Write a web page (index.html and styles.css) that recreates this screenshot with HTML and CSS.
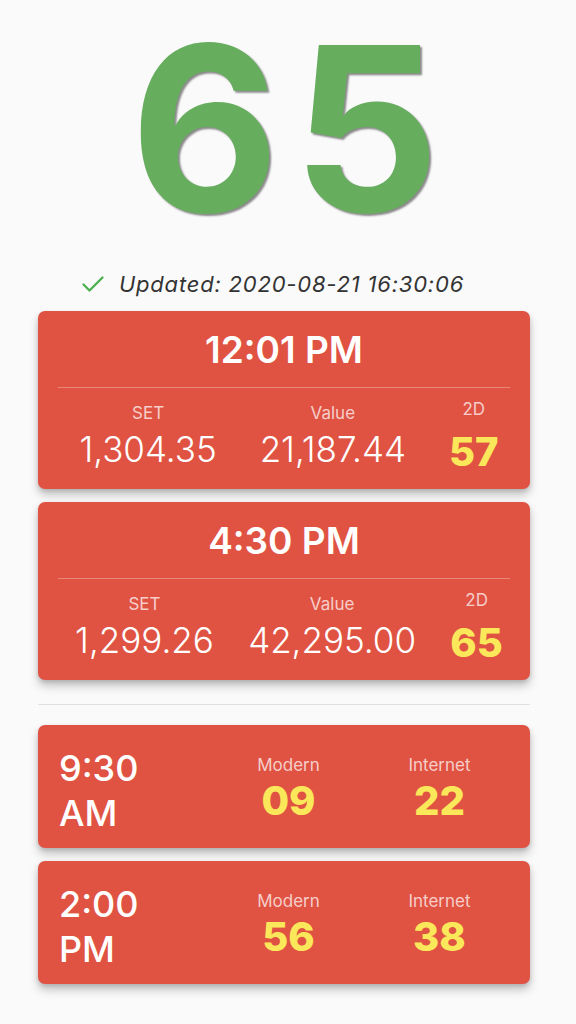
FILE: index.html
```html
<!DOCTYPE html>
<html>
<head>
<meta charset="utf-8">
<link rel="stylesheet" href="styles.css">
</head>
<body>
<div class="page">
  <div class="hero">65</div>
  <div class="updated">
    <svg class="check" viewBox="0 0 24 20" width="24" height="20"><path d="M2.5 10.5L8.5 16.5L21.5 3.5" fill="none" stroke="#4caf50" stroke-width="2.3" stroke-linecap="round" stroke-linejoin="round"/></svg>
    <span>Updated: 2020-08-21 16:30:06</span>
  </div>
  <div class="cards">
    <div class="card big">
      <div class="title">12:01 PM</div>
      <div class="divider"></div>
      <div class="stats">
        <div class="stat"><div class="label">SET</div><div class="value">1,304.35</div></div>
        <div class="stat"><div class="label">Value</div><div class="value">21,187.44</div></div>
        <div class="stat d2"><div class="label">2D</div><div class="value">57</div></div>
      </div>
    </div>
    <div class="card big">
      <div class="title">4:30 PM</div>
      <div class="divider"></div>
      <div class="stats">
        <div class="stat"><div class="label">SET</div><div class="value">1,299.26</div></div>
        <div class="stat"><div class="label">Value</div><div class="value">42,295.00</div></div>
        <div class="stat d2"><div class="label">2D</div><div class="value">65</div></div>
      </div>
    </div>
  </div>
  <div class="sep"></div>
  <div class="cards">
    <div class="card small">
      <div class="time">9:30<br>AM</div>
      <div class="col"><div class="label">Modern</div><div class="num">09</div></div>
      <div class="col"><div class="label">Internet</div><div class="num">22</div></div>
    </div>
    <div class="card small">
      <div class="time">2:00<br>PM</div>
      <div class="col"><div class="label">Modern</div><div class="num">56</div></div>
      <div class="col"><div class="label">Internet</div><div class="num">38</div></div>
    </div>
  </div>
</div>
</body>
</html>
```

FILE: styles.css
```css
* { box-sizing: border-box; }
html, body {
  margin: 0;
  padding: 0;
  background: #fafafa;
  font-family: Inter, "Noto Sans", sans-serif;
}
.page {
  width: 576px;
  height: 1024px;
  overflow: hidden;
  padding: 0 46px 0 38px;
}
.hero {
  font-size: 230px;
  font-weight: 700;
  line-height: 257px;
  color: #66ad5e;
  text-align: center;
  letter-spacing: 13px;
  padding-left: 15px;
  text-shadow: 2px 2px 2px rgba(0,0,0,0.45);
}
.updated {
  display: flex;
  align-items: center;
  justify-content: center;
  gap: 14px;
  height: 24px;
  margin-top: 15px;
  margin-bottom: 15px;
  padding-right: 23px;
  font-size: 22px;
  letter-spacing: 0.8px;
  font-style: italic;
  color: #333;
}
.check { flex: none; }
.cards {
  display: flex;
  flex-direction: column;
  gap: 13px;
}
.card {
  background: #e05343;
  border-radius: 7px;
  color: #fff;
  box-shadow: 0 6px 10px rgba(0,0,0,0.22), 0 2px 4px rgba(0,0,0,0.12);
}
.card.big {
  height: 178px;
  padding: 0 10px 0 20px;
}
.title {
  height: 76px;
  display: flex;
  align-items: center;
  justify-content: center;
  font-size: 37px;
  font-weight: 600;
  margin: 0 -10px 0 -20px;
}
.divider {
  height: 1px;
  background: rgba(255,255,255,0.3);
  margin-right: 10px;
}
.stats {
  display: flex;
  justify-content: space-around;
  padding-top: 14px;
}
.stat {
  display: flex;
  flex-direction: column;
  align-items: center;
}
.label {
  font-size: 17px;
  color: rgba(255,255,255,0.72);
  line-height: 22px;
}
.value {
  font-size: 35px;
  font-weight: 300;
  line-height: 50px;
}
.d2 .label { margin-top: -4px; }
.d2 .value {
  color: #fbe75a;
  font-weight: 800;
  font-size: 40px;
  line-height: 54px;
  padding-top: 5px;
}
.sep {
  height: 1px;
  background: #e0e0e0;
  margin: 24px 0 20px;
}
.card.small {
  height: 123px;
  display: grid;
  grid-template-columns: 154px 151px 151px;
  align-items: center;
  padding: 0 0 0 21px;
}
.time {
  font-size: 36px;
  font-weight: 500;
  line-height: 45px;
  padding-top: 8px;
}
.col {
  display: flex;
  flex-direction: column;
  align-items: center;
  margin-top: 6px;
}
.num {
  color: #fbe75a;
  font-size: 40px;
  font-weight: 800;
  line-height: 50px;
}
```
